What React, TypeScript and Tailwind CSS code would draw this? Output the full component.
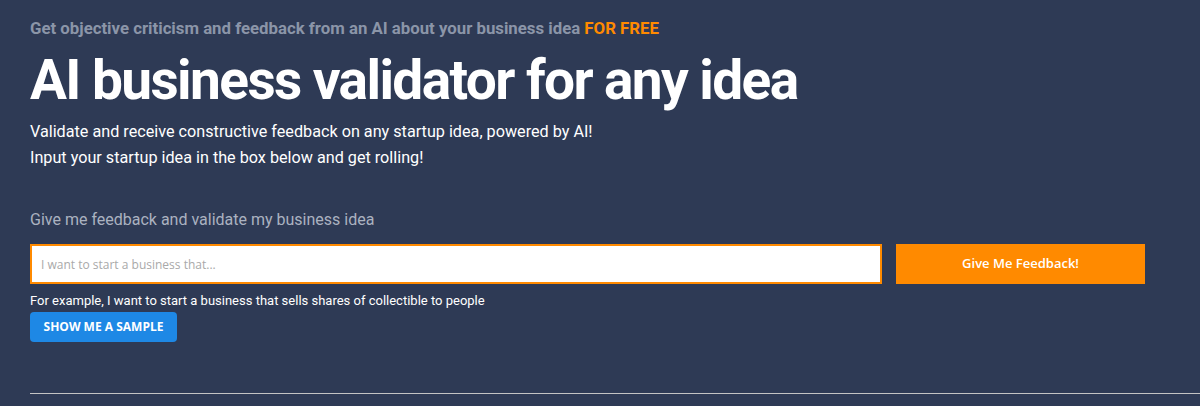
import React, { useState } from "react";

export default function App() {
  const [idea, setIdea] = useState("");

  return (
    <div className="min-h-[406px] bg-[#2e3a55] pl-[30px] font-['Roboto',sans-serif]">
      <p className="pt-[18px] text-[16.8px] font-bold leading-5 text-[#8b95a8]">
        Get objective criticism and feedback from an AI about your business idea{" "}
        <span className="text-[#ff8a00]">FOR FREE</span>
      </p>
      <h1 className="mt-[10px] text-[55px] font-bold leading-[64px] tracking-[-1.6px] text-white">
        AI business validator for any idea
      </h1>
      <div className="mt-[7px] text-[16.2px] leading-[26px] text-white">
        <p>Validate and receive constructive feedback on any startup idea, powered by AI!</p>
        <p>Input your startup idea in the box below and get rolling!</p>
      </div>
      <p className="mt-[37px] text-base leading-6 text-[#abb2c0]">
        Give me feedback and validate my business idea
      </p>
      <div className="mt-[12px] flex items-stretch gap-[14px]">
        <input
          value={idea}
          onChange={(e) => setIdea(e.target.value)}
          placeholder="I want to start a business that..."
          className="h-[40px] w-[852px] border-2 border-[#ff8a00] bg-white px-[9px] font-['Open_Sans',sans-serif] text-[12px] text-gray-700 outline-none placeholder:text-[#a9a9a9]"
        />
        <button className="h-[40px] w-[249px] bg-[#ff8a00] font-['Open_Sans',sans-serif] text-[13px] font-semibold text-white">
          Give Me Feedback!
        </button>
      </div>
      <p className="mt-[9px] text-[13px] leading-4 text-white">
        For example, I want to start a business that sells shares of collectible to people
      </p>
      <button className="mt-[3px] h-[30px] w-[147px] rounded bg-[#1e88e5] font-['Open_Sans',sans-serif] text-[12px] font-bold text-white">
        SHOW ME A SAMPLE
      </button>
      <div className="mt-[51px] border-t border-[#c4c4c4]" />
    </div>
  );
}
